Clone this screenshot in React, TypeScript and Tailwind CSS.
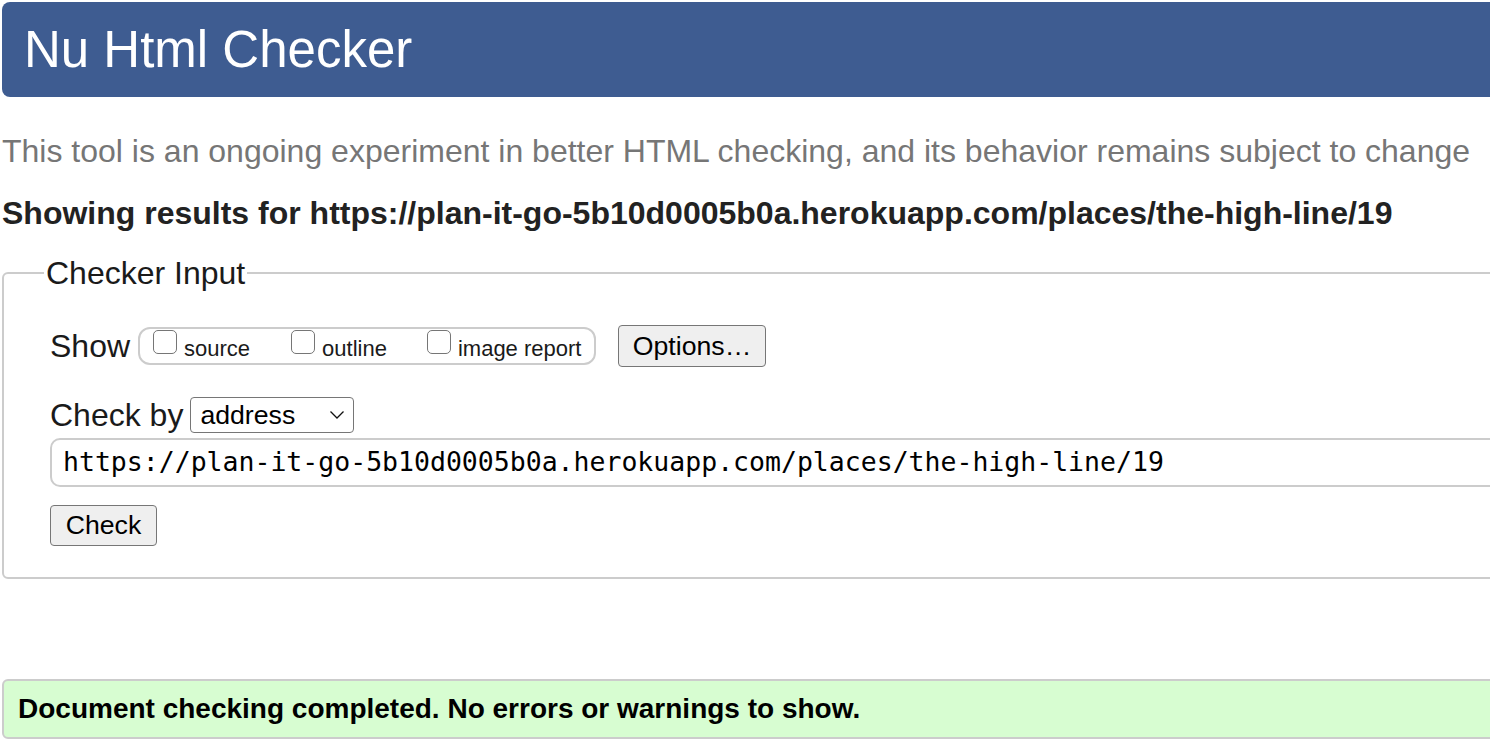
import React from "react";

function Box({ label, ml }: { label: string; ml: string }) {
  return (
    <span className={`flex items-start ${ml}`}>
      <span className="mt-[1px] block h-[24px] w-[24px] rounded-[5px] border-[1.5px] border-[#767676] bg-white" />
      <span className="ml-[7px] mt-[9px] text-[22px] leading-none text-[#1a1a1a]">{label}</span>
    </span>
  );
}

export default function App() {
  return (
    <div
      className="h-[740px] w-[1490px] overflow-hidden bg-white"
      style={{ fontFamily: '"Liberation Sans", Arial, sans-serif' }}
    >
      <div className="w-[1560px] pl-[2px] pt-[2px]">
        <div className="flex h-[95px] items-center rounded-l-[8px] bg-[#3e5c91] pl-[22px]">
          <h1 className="text-[51px] leading-none text-white">Nu Html Checker</h1>
        </div>

        <p className="mt-[34px] whitespace-nowrap text-[32px] leading-[40px] text-[#767676]">
          This tool is an ongoing experiment in better HTML checking, and its behavior remains subject to change
        </p>

        <p className="mt-[22px] whitespace-nowrap text-[32px] font-bold leading-[40px] text-[#222222]">
          Showing results for https://plan-it-go-5b10d0005b0a.herokuapp.com/places/the-high-line/19
        </p>

        <fieldset className="mt-[20px] rounded-[6px] border-[2px] border-[#cccccc] pb-[31px] pl-[46px]">
          <legend className="ml-[-6px] px-[2px] text-[32px] leading-[40px] text-[#1a1a1a]">Checker Input</legend>

          <div className="mt-[32px] flex h-[42px] items-center">
            <span className="text-[32px] leading-none text-[#1a1a1a]">Show</span>
            <div className="ml-[8px] flex h-[38px] w-[458px] items-start rounded-[12px] border-[2px] border-[#cccccc]">
              <Box label="source" ml="ml-[13px]" />
              <Box label="outline" ml="ml-[41px]" />
              <Box label="image report" ml="ml-[40px]" />
            </div>
            <button className="ml-[22px] h-[42px] w-[148px] rounded-[4px] border-[1.5px] border-[#767676] bg-[#efefef] text-[26.67px] leading-none text-black">
              Options…
            </button>
          </div>

          <div className="mt-[30px] flex h-[36px] items-center">
            <span className="text-[32px] leading-none text-[#1a1a1a]">Check by</span>
            <div className="ml-[7px] flex h-[36px] w-[164px] items-center justify-between rounded-[4px] border-[1.5px] border-[#767676] bg-white pl-[9px] pr-[8px]">
              <span className="text-[26.67px] leading-none text-black">address</span>
              <svg width="16" height="10" viewBox="0 0 16 10" fill="none">
                <path d="M1.5 1.5 L8 8 L14.5 1.5" stroke="#111" strokeWidth="1.3" />
              </svg>
            </div>
          </div>

          <div className="mt-[5px] flex h-[49px] items-center rounded-[10px] border-[2px] border-[#cccccc] pl-[11px]">
            <span
              className="whitespace-nowrap text-[26.5px] leading-none text-black"
              style={{ fontFamily: '"DejaVu Sans Mono", monospace' }}
            >
              https://plan-it-go-5b10d0005b0a.herokuapp.com/places/the-high-line/19
            </span>
          </div>

          <button className="mt-[18px] h-[41px] w-[107px] rounded-[4px] border-[1.5px] border-[#767676] bg-[#efefef] text-[26.67px] leading-none text-black">
            Check
          </button>
        </fieldset>

        <div className="mt-[100px] flex h-[60px] items-center rounded-[6px] border-[2px] border-[#cccccc] bg-[#d7fdd1] pl-[14px]">
          <span className="whitespace-nowrap text-[28px] font-bold leading-none text-black">
            Document checking completed. No errors or warnings to show.
          </span>
        </div>
      </div>
    </div>
  );
}
